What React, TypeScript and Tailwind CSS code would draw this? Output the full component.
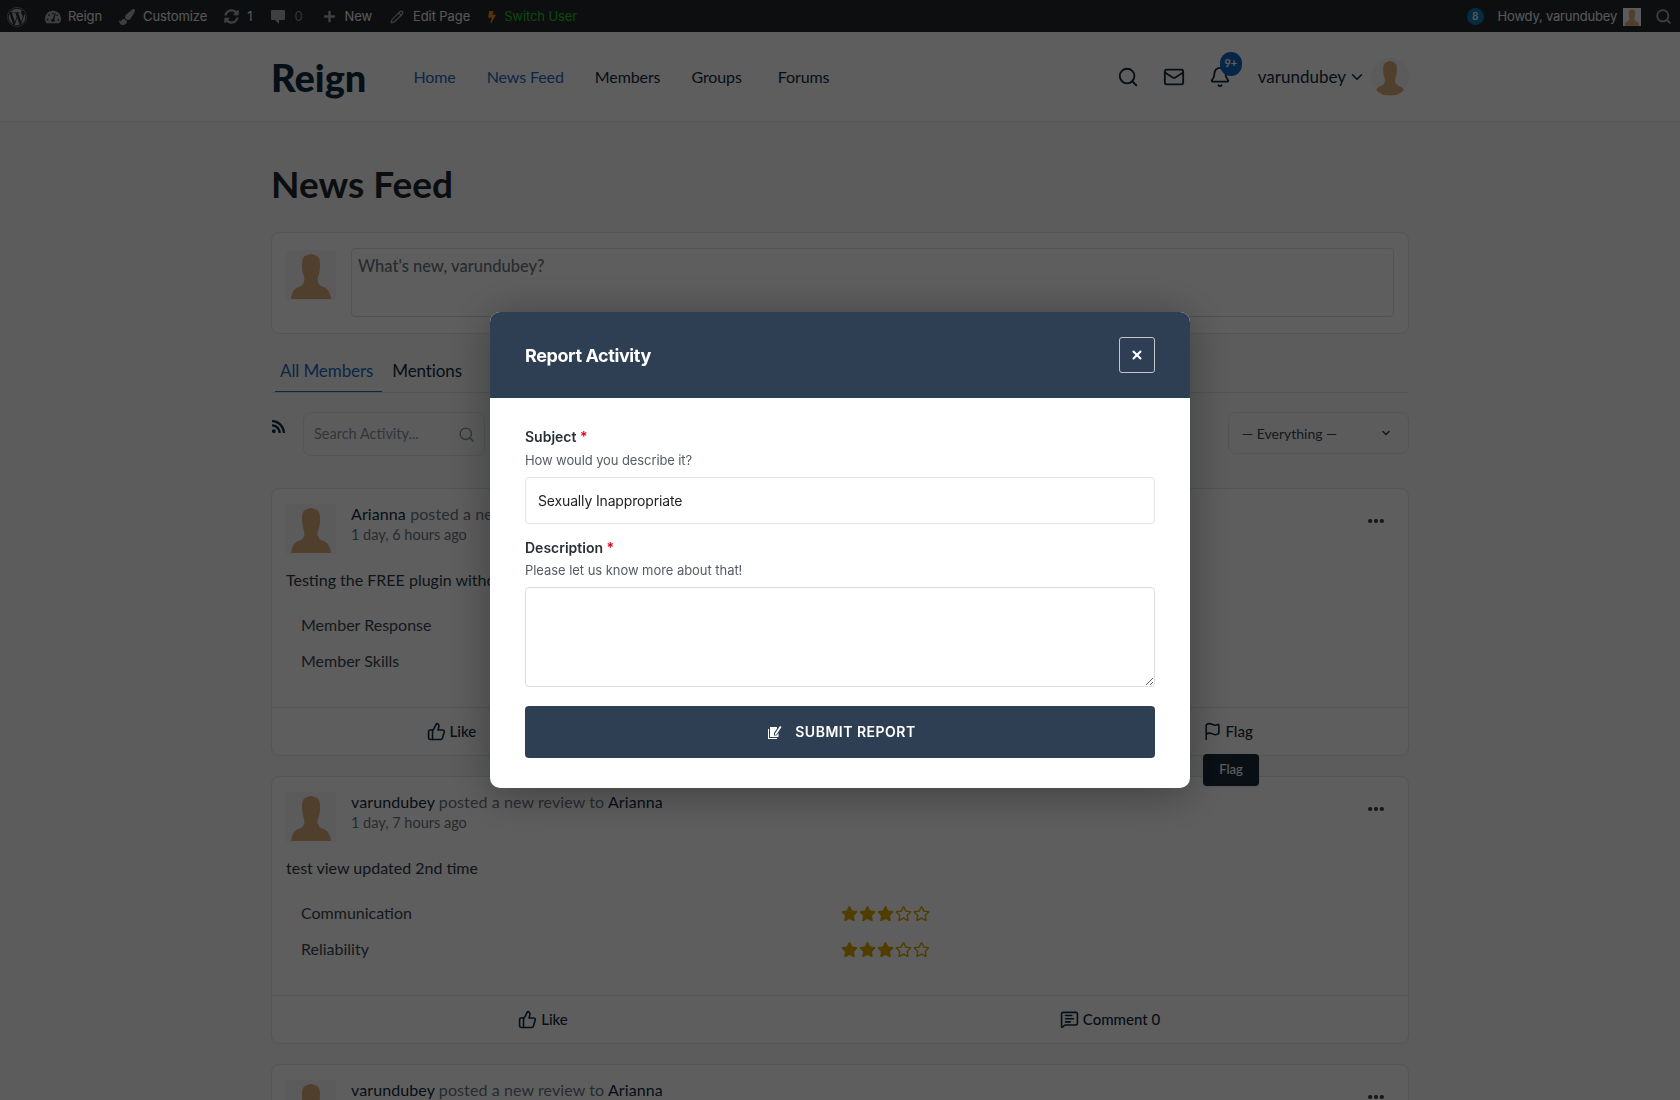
import { Bell, ChevronDown, Flag, Mail, MessageSquareText, MoreHorizontal, Pencil, Search, ThumbsUp, X } from "lucide-react"
import { FaBolt, FaPaintBrush, FaPlus, FaRegStar, FaRss, FaStar, FaSyncAlt, FaTachometerAlt, FaWordpress } from "react-icons/fa"

const navLinks = [
  { name: "Home", className: "text-[#2468b8]" },
  { name: "News Feed", className: "text-[#2468b8]" },
  { name: "Members", className: "" },
  { name: "Groups", className: "" },
  { name: "Forums", className: "ml-[5px]" },
]

function Avatar({ className }: { className: string }) {
  return (
    <svg viewBox="0 0 50 50" className={className}>
      <rect width="50" height="50" fill="#f6f6f6" />
      <path
        d="M25 4c-2 0-3 1-6 2-3 2-3 6-3 10 0 5 1 8 2 11 1 3 0 7-3 9-3 1-7 3-8 6-1 2-2 5-2 7h40c0-2-1-5-2-7-1-3-5-5-8-6-3-2-4-6-3-9 1-3 2-6 2-11 0-4 0-8-3-10-3-1-4-2-6-2z"
        fill="#dcab7e"
      />
    </svg>
  )
}

function Stars() {
  return (
    <div className="flex gap-[1px] text-[#d9a500]">
      {[0, 1, 2].map((i) => (
        <FaStar key={i} className="h-[17px] w-[17px]" />
      ))}
      {[0, 1].map((i) => (
        <FaRegStar key={i} className="h-[17px] w-[17px]" />
      ))}
    </div>
  )
}

function ActivityCard({
  actor,
  target,
  time,
  text,
  ratings,
  flag,
}: {
  actor: string
  target: string
  time: string
  text: string
  ratings: string[]
  flag?: boolean
}) {
  return (
    <div className="relative rounded-lg border border-[#e3e6ea] bg-white">
      <div className="h-[218px] px-[14px] pt-[13px]">
        <div className="flex">
          <Avatar className="mt-[2px] h-[50px] w-[50px] shrink-0" />
          <div className="ml-[15px]">
            <div className="text-[16px] leading-[24px] tracking-[0.1px] text-[#6b7580]">
              <span className="text-[#0e2a40]">{actor}</span> posted a new review to{" "}
              <span className="text-[#0e2a40]">{target}</span>
            </div>
            <div className="text-[14.5px] leading-[18px] text-[#6b7580]">{time}</div>
          </div>
        </div>
        <p className="mt-[14px] text-[16px] leading-[24px] text-[#2b3a47]">{text}</p>
        <div className="mt-[21px] flex flex-col gap-[12px] pl-[15px]">
          {ratings.map((label) => (
            <div key={label} className="flex h-[24px] items-center text-[16px] text-[#3a4650]">
              <span className="w-[540px]">{label}</span>
              <Stars />
            </div>
          ))}
        </div>
      </div>
      <div className="flex h-[48px] items-center border-t border-[#e3e6ea] text-[15px] font-medium text-[#0e2a40]">
        {flag ? (
          <>
            <div className="flex w-1/3 items-center justify-center gap-[4px] pr-[20px]">
              <ThumbsUp className="h-[19px] w-[19px]" /> Like
            </div>
            <div className="flex w-1/3 items-center justify-center gap-[4px]">
              <MessageSquareText className="h-[19px] w-[19px]" /> Comment 0
            </div>
            <div className="flex w-1/3 items-center justify-center gap-[4px] pl-[18px]">
              <Flag className="h-[19px] w-[19px]" /> Flag
            </div>
          </>
        ) : (
          <>
            <div className="flex w-1/2 items-center justify-center gap-[4px] pr-[26px]">
              <ThumbsUp className="h-[19px] w-[19px]" /> Like
            </div>
            <div className="flex w-1/2 items-center justify-center gap-[4px] pr-[28px]">
              <MessageSquareText className="h-[19px] w-[19px]" /> Comment 0
            </div>
          </>
        )}
      </div>
      <MoreHorizontal className="absolute right-[22px] top-[22px] h-[20px] w-[20px] text-[#27323c]" strokeWidth={3} />
      {flag && (
        <div className="absolute right-[149px] top-[265px] z-10 flex h-[32px] w-[56px] items-center justify-center rounded bg-[#1b2a3a] text-[13px] font-medium text-white shadow">
          Flag
        </div>
      )}
    </div>
  )
}

export default function App() {
  return (
    <div className="relative h-[1100px] overflow-hidden bg-[#f8fafa] font-['Lato',sans-serif]">
      {/* Admin bar */}
      <div className="flex h-[32px] items-center justify-between bg-[#23282d] pl-[7px] pr-[8px] pt-[1px] font-['Inter',sans-serif] text-[13px] tracking-[-0.1px] text-[#eeeeee]">
        <div className="flex items-center">
          <FaWordpress className="h-[20px] w-[20px] text-[#a7aaad]" />
          <FaTachometerAlt className="ml-[18px] h-[16px] w-[16px] text-[#a7aaad]" />
          <span className="ml-[7px]">Reign</span>
          <FaPaintBrush className="ml-[17px] h-[16px] w-[16px] text-[#a7aaad]" />
          <span className="ml-[8px]">Customize</span>
          <FaSyncAlt className="ml-[17px] h-[15px] w-[15px] text-[#a7aaad]" />
          <span className="ml-[8px]">1</span>
          <svg viewBox="0 0 16 16" className="ml-[18px] h-[16px] w-[16px] text-[#a7aaad]" fill="currentColor">
            <path d="M2 1h12a1 1 0 0 1 1 1v8a1 1 0 0 1-1 1H9v4l-4-4H2a1 1 0 0 1-1-1V2a1 1 0 0 1 1-1z" />
          </svg>
          <span className="ml-[8px] text-[#8a8d90]">0</span>
          <FaPlus className="ml-[20px] h-[13px] w-[13px] text-[#a7aaad]" />
          <span className="ml-[9px]">New</span>
          <Pencil className="ml-[18px] h-[14px] w-[14px] text-[#a7aaad]" />
          <span className="ml-[9px]">Edit Page</span>
          <FaBolt className="ml-[16px] h-[12px] w-[12px] text-[#e08a1e]" />
          <span className="ml-[6px] text-[#22c422]">Switch User</span>
        </div>
        <div className="flex items-center">
          <span className="flex h-[17px] w-[17px] items-center justify-center rounded-full bg-[#0b7ab0] text-[10px] font-semibold">8</span>
          <span className="ml-[14px] tracking-[-0.2px]">Howdy, varundubey</span>
          <Avatar className="ml-[6px] h-[18px] w-[18px]" />
          <Search className="ml-[14px] h-[17px] w-[17px] text-[#a7aaad]" strokeWidth={2.5} />
        </div>
      </div>

      {/* Site header */}
      <header className="h-[90px] border-b border-[#e8ecec] bg-white">
        <div className="mx-auto flex h-full w-[1138px] items-center">
          <span className="text-[38px] font-black leading-none text-[#10293d]">Reign</span>
          <nav className="ml-[47px] flex gap-[31px] text-[16px] tracking-[-0.1px] text-[#10293d]">
            {navLinks.map((link) => (
              <a key={link.name} className={link.className}>
                {link.name}
              </a>
            ))}
          </nav>
          <div className="ml-auto flex items-center text-[#10293d]">
            <Search className="h-[22px] w-[22px]" />
            <Mail className="ml-[24px] h-[22px] w-[22px]" />
            <div className="relative ml-[24px]">
              <Bell className="h-[22px] w-[22px]" />
              <span className="absolute -right-[11px] -top-[14px] flex h-[24px] w-[22px] items-center justify-center rounded-full bg-[#1565c0] text-[11px] font-bold text-white">
                9+
              </span>
            </div>
            <span className="ml-[27px] text-[17px]">varundubey</span>
            <ChevronDown className="ml-[2px] h-[18px] w-[18px]" />
            <Avatar className="ml-[5px] h-[38px] w-[38px] rounded-full" />
          </div>
        </div>
      </header>

      {/* Content */}
      <main className="mx-auto w-[1138px]">
        <h1 className="mt-[39px] text-[37px] font-bold leading-[46px] text-[#1c2630]">News Feed</h1>

        <div className="mt-[25px] flex h-[102px] rounded-lg border border-[#e3e6ea] bg-white p-[14px] pt-[15px]">
          <Avatar className="mt-[2px] h-[50px] w-[50px] shrink-0" />
          <div className="ml-[15px] h-[69px] flex-1 rounded border border-[#d9dde0] px-[6px] py-[5px] text-[16.5px] font-medium text-[#6b7580]">
            What's new, varundubey?
          </div>
        </div>

        <div className="mt-[17px] flex h-[42px] border-b border-[#e3e6ea] text-[17px] tracking-[-0.1px]">
          <div className="ml-[4px] border-b border-[#1d66c1] pl-[5px] pr-[9px] pt-[7px] text-[#1d66c1]">All Members</div>
          <div className="ml-[10px] pt-[7px] text-[#10293d]">Mentions</div>
        </div>

        <div className="mt-[19px] flex h-[44px] items-start">
          <FaRss className="mt-[7px] h-[15px] w-[15px] text-[#10293d]" />
          <div className="ml-[17px] flex h-[44px] w-[182px] items-center justify-between rounded-lg border border-[#e3e6ea] pl-[10px] pr-[9px] text-[14.5px] text-[#8a9199]">
            Search Activity...
            <Search className="h-[17px] w-[17px]" />
          </div>
          <div className="ml-auto flex h-[42px] w-[181px] items-center justify-between rounded-lg border border-[#e3e6ea] pl-[13px] pr-[16px] text-[14px] text-[#3a4650]">
            — Everything —
            <ChevronDown className="h-[12px] w-[12px]" strokeWidth={3} />
          </div>
        </div>

        <div className="mt-[32px] flex flex-col gap-[20px]">
          <ActivityCard
            actor="Arianna"
            target="varundubey"
            time="1 day, 6 hours ago"
            text="Testing the FREE plugin without any add-ons"
            ratings={["Member Response", "Member Skills"]}
            flag
          />
          <ActivityCard
            actor="varundubey"
            target="Arianna"
            time="1 day, 7 hours ago"
            text="test view updated 2nd time"
            ratings={["Communication", "Reliability"]}
          />
          <ActivityCard
            actor="varundubey"
            target="Arianna"
            time="1 day, 7 hours ago"
            text="test view updated"
            ratings={["Communication", "Reliability"]}
          />
        </div>
      </main>

      {/* Modal */}
      <div className="fixed inset-0 z-20 flex items-center justify-center bg-black/[0.63] font-['Inter',sans-serif]">
        <div className="w-[700px] overflow-hidden rounded-[10px] bg-white shadow-[0_5px_45px_rgba(0,0,0,0.35)]">
          <div className="flex h-[86px] items-center justify-between bg-[#2e3f53] pl-[35px] pr-[35px]">
            <h2 className="text-[18px] font-bold tracking-[-0.4px] text-white">Report Activity</h2>
            <button className="flex h-[36px] w-[36px] items-center justify-center rounded-[3px] border border-[#c0c6cc] text-white">
              <X className="h-[14px] w-[14px]" strokeWidth={3.5} />
            </button>
          </div>
          <div className="px-[35px] pb-[30px] pt-[29px]">
            <label className="block text-[14px] font-semibold leading-[20px] text-[#2a2f35]">
              Subject <span className="text-[#e3001b]">*</span>
            </label>
            <p className="mt-[3px] text-[13px] leading-[20px] tracking-[-0.1px] text-[#555c63]">How would you describe it?</p>
            <input
              readOnly
              value="Sexually Inappropriate"
              className="mt-[7px] block h-[47px] w-full rounded border border-[#e3e3e3] px-[12px] text-[14px] tracking-[-0.15px] text-[#222222]"
            />
            <label className="mt-[14px] block text-[14px] font-semibold leading-[20px] text-[#2a2f35]">
              Description <span className="text-[#e3001b]">*</span>
            </label>
            <p className="mt-[2px] text-[13px] leading-[20px] tracking-[-0.05px] text-[#555c63]">Please let us know more about that!</p>
            <textarea readOnly className="mt-[7px] block h-[100px] w-full rounded border border-[#dddddd]" />
            <button className="mt-[19px] flex h-[52px] w-full items-center justify-center gap-[13px] rounded bg-[#2e3f53] pb-[1px] pl-[4px] text-[14px] font-semibold tracking-[0.5px] text-white">
              <svg viewBox="0 0 14 16" className="h-[16px] w-[14px]" fill="currentColor">
                <path d="M2 3h7v1.5L6 9v2.5h2.5L10.500 9v4H2z" />
                <path d="M0 5h1v9h8v1H0z" />
                <path d="M7 9.500l5-7.500 1.500 1-5 7.500-1.500.5z" />
              </svg>
              SUBMIT REPORT
            </button>
          </div>
        </div>
      </div>
    </div>
  )
}
